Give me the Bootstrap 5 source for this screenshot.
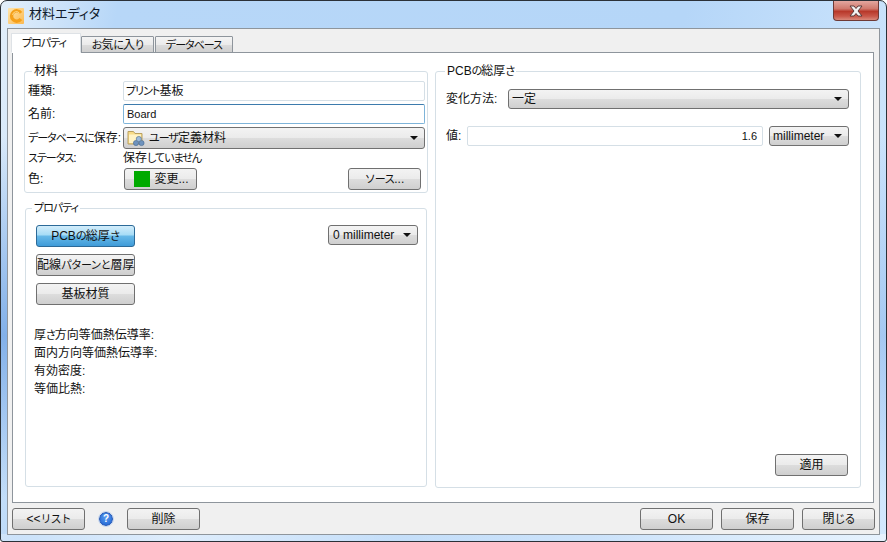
<!DOCTYPE html>
<html lang="ja">
<head>
<meta charset="utf-8">
<title>材料エディタ</title>
<link href="https://cdn.jsdelivr.net/npm/bootstrap@5.3.0/dist/css/bootstrap.min.css" rel="stylesheet">
<style>
html,body{height:100%;margin:0;background:#fff;overflow:hidden}
body{font-family:"Liberation Sans","Noto Sans CJK JP",sans-serif;font-size:12px;line-height:14px;color:#111;font-feature-settings:"palt"}
.kn{font-size:11px;letter-spacing:-1px}
.aero{width:887px;height:542px;border:1px solid #2b3138;border-radius:7px 7px 3px 3px;background:linear-gradient(180deg,rgba(70,135,220,0) 25%,rgba(70,135,220,.55) 62%,rgba(70,135,220,0) 92%) left top/7px 100% no-repeat,linear-gradient(180deg,rgba(70,135,220,0) 25%,rgba(70,135,220,.3) 62%,rgba(70,135,220,0) 92%) right top/7px 100% no-repeat,linear-gradient(90deg,rgba(255,255,255,.25),rgba(255,255,255,.55) 20%,rgba(255,255,255,.2) 45%,rgba(255,255,255,.45) 100%) left bottom/100% 7px no-repeat,linear-gradient(100deg,#e3effa 0,#b7d7f8 12%,#b5d6f8 70%,#d2e8fd 100%);padding:0 6px 6px}
.ttl{height:27px;font-size:13px}
.ttl-name{margin-left:5px;margin-top:6px;color:#101c2c}
.ttl-ico{margin-left:1px;margin-top:7px}
.xbtn{width:46px;height:20px;margin-right:1px;border:1px solid #6e3a36;border-top:0;border-radius:0 0 4px 4px;background:linear-gradient(180deg,#e3a79f 0,#d07a6e 40%,#b8392b 55%,#c9584a 80%,#d98a7c 100%)}
.shell{height:507px;border:1px solid #8e959c;background:#f0f0f0;padding:4px 5px 0 3px}
.nav.tabs{height:20px;border-bottom:0;flex-wrap:nowrap;align-items:flex-end;position:relative;z-index:1}
.tabs .nav-link{height:17px;margin:0;padding:0;border:1px solid #8e959c;border-radius:1px 1px 0 0;color:#111;font-size:12px;line-height:16px;text-align:center;background:linear-gradient(180deg,#f4f4f4 0,#ebebeb 50%,#dcdcdc 51%,#d0d0d0 100%)}
.tabs .nav-link.active{height:20px;background:#fff;border-bottom-color:#fff;line-height:18px;padding:0 4px 2px 0;color:#111}
.tw1{width:70px}.tw2{width:73px}.tw3{width:78px;margin-left:1px!important}
.pane{height:451px;border:1px solid #8e959c;background:#fff;margin-top:-1px;margin-left:1px;padding:11px 12px 0 11px}
.lcol{width:404px;margin-right:7px}
.rcol{width:426px}
fieldset.gb{border:1px solid #d5dfe6;border-radius:3px;margin:0;padding:0;min-width:0}
fieldset.gb legend{float:none;width:auto;font-size:12px;line-height:14px;padding:0 2px;color:#111}
.gb-a{height:129px;padding:3px 2px 0 3px!important}
.gb-a legend{margin:0 0 0 4px}
.gb-b{height:286px;margin:8px 1px 0 1px!important;padding:10px 9px 0 10px!important}
.gb-b legend{margin:0 0 0 -4px}
.gb-c{height:424px;padding:11px 11px 0 10px!important;position:relative}
.gb-c legend{margin:0 0 0 -1px}
.rowl{margin-bottom:3px}
.rowi{height:20px}
.rowc{height:22px;margin-bottom:1px}
.rows{height:16px;margin-bottom:2px}
.lbl{width:95px;white-space:nowrap;flex:none}
.inp{height:20px;padding:0 2px;border:1px solid #d5dfe6;border-radius:2px;font-size:12px;line-height:18px;color:#111;box-shadow:none;background:#fff;white-space:nowrap}
.inp.foc{border-color:#7eb4d9;border-top-color:#3d7bad;padding-left:3px;font-size:11px}
.inp.tiny{font-size:11px;padding-right:5px}
.pbtn{padding:0;border:1px solid #707070;border-radius:3px;color:#111;font-size:12px;line-height:18px;white-space:nowrap;background:linear-gradient(180deg,#f3f3f3 0,#ebebeb 49%,#dddddd 50%,#cfcfcf 100%)}
.pbtn:hover{color:#111;border-color:#707070}
.w73{width:73px;height:22px}
.w99{width:99px;height:22px}
.colbtn{margin-left:1px;padding-left:2px}
.cmb{height:20px;border:1px solid #707070;border-radius:3px;padding:0 6px 0 3px;background:linear-gradient(180deg,#f3f3f3 0,#ebebeb 49%,#dddddd 50%,#cfcfcf 100%);white-space:nowrap}
.cmb-t{height:22px}
.cmb-u{width:90px;padding-left:4px;margin-right:-1px}
.cmb-m{width:80px;margin-left:6px;flex:none}
.tri{width:0;height:0;border:solid transparent;border-width:4px 4px 0;border-top-color:#111;margin-left:auto;flex:none}
.swatch{width:16px;height:16px;background:#00aa00;flex:none;margin-right:4px}
.blu{background:linear-gradient(180deg,#d3edfb 0,#a6dcf6 45%,#67b9e8 50%,#3f9bd8 100%);border-color:#2c6a98}
.mt-btn{margin-top:7px}
.lst{margin:21px 0 0 -2px}
.lst div{height:18px;line-height:18px;white-space:nowrap}
.foot{height:33px;padding:5px 0 0 1px;margin-right:-1px}
.qm{width:14px;height:14px;border-radius:50%;border:1px solid #1c4fb0;background:radial-gradient(circle at 50% 35%,#5a9df0,#1b5fd0);color:#fff;font-size:10px;font-weight:700;line-height:12px;text-align:center;outline:1px solid #c4d6ef;margin:4px 14px 0}
.l62{width:62px;flex:none}
.l21{width:21px;flex:none}
.gap-r{margin-bottom:17px}
.apply{position:absolute;right:12px;bottom:11px}
</style>
</head>
<body>
<div class="aero">
  <div class="ttl d-flex align-items-start">
    <svg class="ttl-ico" width="16" height="16" viewBox="0 0 16 16"><defs><linearGradient id="og" x1="0" y1="0" x2="1" y2="1"><stop offset="0" stop-color="#ffe6ae"/><stop offset="1" stop-color="#fbb84e"/></linearGradient></defs><rect width="16" height="16" rx="1" fill="url(#og)"/><path d="M12.9 4.9A5.2 5.2 0 1 0 12.9 11.1" fill="none" stroke="#f5a01a" stroke-width="3.4"/><path d="M11.6 5.4A3.8 3.8 0 0 0 4.6 7" fill="none" stroke="#ffd98a" stroke-width="1"/></svg>
    <div class="ttl-name">材料エディタ</div>
    <div class="xbtn ms-auto d-flex align-items-center justify-content-center">
      <svg width="16" height="12" viewBox="0 0 16 12"><path d="M2 1H6L8 3.5L10 1H14L10 6L14 11H10L8 8.5L6 11H2L6 6Z" fill="#f4f4f4" stroke="#5a3a3a" stroke-width="1"/></svg>
    </div>
  </div>
  <div class="shell">
    <ul class="nav nav-tabs tabs">
      <li class="nav-item"><a class="nav-link active tw1" href="#"><span class="kn">プロパティ</span></a></li>
      <li class="nav-item"><a class="nav-link tw2" href="#"><span class="kn">お</span>気<span class="kn">に</span>入<span class="kn">り</span></a></li>
      <li class="nav-item"><a class="nav-link tw3" href="#"><span class="kn">データベース</span></a></li>
    </ul>
    <div class="pane d-flex">
      <div class="lcol">
        <fieldset class="gb gb-a">
          <legend>材料</legend>
          <div class="rowl rowi d-flex align-items-center"><span class="lbl">種類:</span><div class="form-control inp"><span class="kn">プリント</span>基板</div></div>
          <div class="rowl rowi d-flex align-items-center"><span class="lbl">名前:</span><div class="form-control inp foc">Board</div></div>
          <div class="rowc d-flex align-items-center"><span class="lbl"><span class="kn">データベースに</span>保存:</span>
            <div class="cmb d-flex align-items-center flex-grow-1 cmb-t">
              <svg class="me-1" width="18" height="18" viewBox="0 0 18 18"><path d="M1 2.5H6.5L8 4.5H15V15H1Z" fill="#f8dc88" stroke="#b9a060"/><rect x="2" y="5.5" width="12" height="8.5" fill="#fff3c6"/><circle cx="9" cy="14" r="2.6" fill="#6f93bd" stroke="#46688f" stroke-width=".6"/><circle cx="14.5" cy="14" r="2.6" fill="#6f93bd" stroke="#46688f" stroke-width=".6"/><circle cx="11.8" cy="10" r="2.6" fill="#9dbbdb" stroke="#46688f" stroke-width=".6"/></svg>
              <span><span class="kn">ユーザ</span>定義材料</span><span class="tri"></span>
            </div>
          </div>
          <div class="rows d-flex align-items-center"><span class="lbl"><span class="kn">ステータス</span>:</span><span>保存<span class="kn">していません</span></span></div>
          <div class="d-flex align-items-center"><span class="lbl">色:</span>
            <button class="btn pbtn w73 colbtn d-flex align-items-center justify-content-center" type="button"><span class="swatch"></span>変更...</button>
            <button class="btn pbtn w73 ms-auto me-1" type="button"><span class="kn">ソース</span>...</button>
          </div>
        </fieldset>
        <fieldset class="gb gb-b">
          <legend><span class="kn">プロパティ</span></legend>
          <div class="d-flex align-items-start justify-content-between">
            <div class="d-flex flex-column">
              <button class="btn pbtn blu w99" type="button">PCB<span class="kn">の</span>総厚<span class="kn">さ</span></button>
              <button class="btn pbtn w99 mt-btn" type="button">配線<span class="kn">パターンと</span>層厚</button>
              <button class="btn pbtn w99 mt-btn" type="button">基板材質</button>
            </div>
            <div class="cmb d-flex align-items-center cmb-u"><span>0 millimeter</span><span class="tri"></span></div>
          </div>
          <div class="lst">
            <div>厚<span class="kn">さ</span>方向等価熱伝導率:</div>
            <div>面内方向等価熱伝導率:</div>
            <div>有効密度:</div>
            <div>等価比熱:</div>
          </div>
        </fieldset>
      </div>
      <div class="rcol">
        <fieldset class="gb gb-c">
          <legend>PCB<span class="kn">の</span>総厚<span class="kn">さ</span></legend>
          <div class="d-flex align-items-center gap-r">
            <span class="l62">変化方法:</span>
            <div class="cmb d-flex align-items-center flex-grow-1"><span>一定</span><span class="tri"></span></div>
          </div>
          <div class="d-flex align-items-center">
            <span class="l21">値:</span>
            <div class="form-control inp tiny text-end flex-grow-1 w-auto">1.6</div>
            <div class="cmb d-flex align-items-center cmb-m"><span>millimeter</span><span class="tri"></span></div>
          </div>
          <button class="btn pbtn w73 apply" type="button">適用</button>
        </fieldset>
      </div>
    </div>
    <div class="foot d-flex align-items-start">
      <button class="btn pbtn w73" type="button">&lt;&lt;<span class="kn">リスト</span></button>
      <span class="qm">?</span>
      <button class="btn pbtn w73" type="button">削除</button>
      <button class="btn pbtn w73 ms-auto" type="button">OK</button>
      <button class="btn pbtn w73 ms-2" type="button">保存</button>
      <button class="btn pbtn w73 ms-2" type="button">閉<span class="kn">じる</span></button>
    </div>
  </div>
</div>
</body>
</html>
